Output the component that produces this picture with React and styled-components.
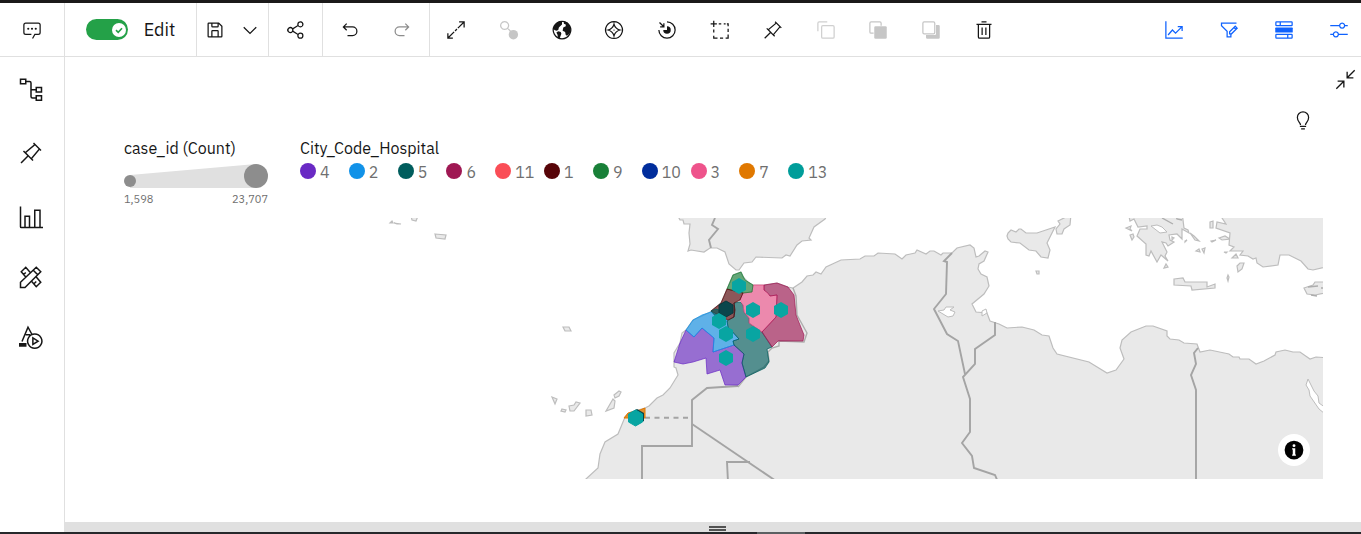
import React from "react";
import styled, { createGlobalStyle } from "styled-components";

const GlobalStyle = createGlobalStyle`
  *, *::before, *::after { box-sizing: border-box; }
  html, body, #root { height: 100%; margin: 0; }
  body {
    background: #fff;
    color: #161616;
    font-family: "IBM Plex Sans", Roboto, "Liberation Sans", sans-serif;
    font-size: 16px;
  }
`;

/* ---------- layout ---------- */

const Shell = styled.div`
  display: flex;
  flex-direction: column;
  min-height: 100%;
  border-top: 3px solid #1b1919;
`;

const Toolbar = styled.header`
  display: flex;
  height: 54px;
  border-bottom: 1px solid #e0e0e0;
`;

const Group = styled.div`
  display: flex;
  align-items: center;
  justify-content: ${(p) => p.$justify || "center"};
  width: ${(p) => p.$width}px;
  padding: 0 ${(p) => p.$pad || 0}px;
  border-right: ${(p) => (p.$plain ? "none" : "1px solid #e0e0e0")};
  margin-left: ${(p) => (p.$end ? "auto" : 0)};
`;

const IconButton = styled.button`
  display: flex;
  align-items: center;
  justify-content: center;
  width: ${(p) => p.$size || 20}px;
  height: ${(p) => p.$size || 20}px;
  padding: 0;
  border: 0;
  background: none;
  color: ${(p) => p.$color || "#161616"};
  cursor: pointer;
  &:disabled { cursor: default; }
`;

const Body = styled.div`
  display: flex;
  flex: 1;
`;

const Sidebar = styled.nav`
  display: flex;
  flex-direction: column;
  align-items: center;
  gap: 36px;
  width: 65px;
  padding: 20px 2px 0 0;
  border-right: 1px solid #e0e0e0;
`;

const SideGroup = styled.div`
  display: flex;
  flex-direction: column;
  gap: ${(p) => p.$gap}px;
`;

const Main = styled.main`
  display: flex;
  flex: 1;
  flex-direction: column;
  min-width: 0;
`;

const CornerActions = styled.div`
  display: flex;
  flex-direction: column;
  align-items: flex-end;
  gap: 20px;
  padding: 12px 5px 0 0;
`;

const HintRow = styled.div`
  display: flex;
  padding-right: 43px;
`;

const Chart = styled.section`
  display: flex;
  flex-direction: column;
  gap: 12px;
  padding: 8px 38px 0 59px;
`;

const Legends = styled.div`
  display: flex;
  gap: 32px;
  height: 68px;
`;

const Legend = styled.div`
  width: ${(p) => p.$width}px;
`;

const LegendTitle = styled.h2`
  margin: 0 0 5px;
  font-size: 16px;
  font-weight: 400;
  line-height: 20px;
  white-space: nowrap;
`;

const RangeLabels = styled.div`
  display: flex;
  justify-content: space-between;
  margin-top: 4px;
  color: #6f6f6f;
  font-size: 11px;
  line-height: 14px;
`;

const Swatches = styled.ul`
  display: grid;
  grid-template-columns: repeat(11, 1fr);
  margin: 0;
  padding: 0;
  list-style: none;
`;

const Swatch = styled.li`
  display: flex;
  align-items: flex-start;
  gap: 4px;
  color: #6f6f6f;
  line-height: 18px;
  &::before {
    content: "";
    width: 16px;
    height: 16px;
    border-radius: 50%;
    background: ${(p) => p.$color};
  }
`;

const MapFrame = styled.div`
  position: relative;
  height: 261px;
  overflow: hidden;
`;

const MapSvg = styled.svg`
  display: block;
  width: 100%;
  height: 261px;
`;

const InfoButton = styled.button`
  position: absolute;
  right: 13px;
  bottom: 13px;
  display: flex;
  align-items: center;
  justify-content: center;
  width: 32px;
  height: 32px;
  padding: 0;
  border: 0;
  border-radius: 50%;
  background: #fff;
`;

const Splitter = styled.div`
  display: flex;
  flex-direction: column;
  align-items: center;
  gap: 1px;
  height: 10px;
  margin-top: auto;
  padding: 4px 0 0 8px;
  background: #e0e0e0;
  &::before, &::after {
    content: "";
    width: 17px;
    height: 2px;
    background: #525252;
  }
`;

const Taskbar = styled.footer`
  display: flex;
  justify-content: center;
  height: 2px;
  padding-left: 201px;
  background: #26282b;
`;

const TaskbarItem = styled.span`
  width: 48px;
  background: #5b6062;
`;

/* ---------- edit switch ---------- */

const SwitchLabel = styled.label`
  display: flex;
  align-items: center;
  gap: 16px;
  font-size: 18px;
  line-height: 24px;
  cursor: pointer;
`;

const SwitchInput = styled.input`
  appearance: none;
  width: 42px;
  height: 21px;
  margin: 0;
  border-radius: 11px;
  background: #24a148 url("data:image/svg+xml,%3Csvg xmlns='http://www.w3.org/2000/svg' viewBox='0 0 14 14'%3E%3Ccircle cx='7' cy='7' r='7' fill='white'/%3E%3Cpath d='M4 7.2l2.2 2.1L10 5.2' fill='none' stroke='%2324a148' stroke-width='1.6'/%3E%3C/svg%3E")
    no-repeat right 2px center / 14px 14px;
`;

/* ---------- icons ---------- */

const filled = (d) => <path fill="currentColor" d={d} />;
const lined = (d, w = 2) => (
  <path fill="none" stroke="currentColor" strokeWidth={w} d={d} />
);

const PIN =
  "M28.59,13.31,30,11.9,20,2,18.69,3.42,19.87,4.6,8.38,14.32,6.66,12.61,5.25,14l5.66,5.68L2,28.58,3.41,30l8.91-8.91L18,26.75l1.39-1.42-1.71-1.71L27.4,12.13ZM16.26,22.2,9.8,15.74,21.29,6,26,10.71Z";

const ICONS = {
  chat: (
    <>
      {filled("M17.74,30,16,29l4-7h6a2,2,0,0,0,2-2V8a2,2,0,0,0-2-2H6A2,2,0,0,0,4,8V20a2,2,0,0,0,2,2h9v2H6a4,4,0,0,1-4-4V8A4,4,0,0,1,6,4H26a4,4,0,0,1,4,4V20a4,4,0,0,1-4,4H21.16Z")}
      <g fill="currentColor">
        <circle cx="10" cy="14" r="1.7" /><circle cx="16" cy="14" r="1.7" /><circle cx="22" cy="14" r="1.7" />
      </g>
    </>
  ),
  save: filled("M27.71,9.29l-5-5A1,1,0,0,0,22,4H6A2,2,0,0,0,4,6V26a2,2,0,0,0,2,2H26a2,2,0,0,0,2-2V10A1,1,0,0,0,27.71,9.29ZM12,6h8v4H12Zm8,20H12V18h8Zm2,0V18a2,2,0,0,0-2-2H12a2,2,0,0,0-2,2v8H6V6h4v4a2,2,0,0,0,2,2h8a2,2,0,0,0,2-2V6.41l4,4V26Z"),
  chevron: lined("M6 11.5l10 10 10-10"),
  share: filled("M23,20a5,5,0,0,0-3.89,1.89L11.8,17.32a4.46,4.46,0,0,0,0-2.64l7.31-4.57A5,5,0,1,0,18,7a4.79,4.79,0,0,0,.2,1.32l-7.31,4.57a5,5,0,1,0,0,6.22l7.31,4.57A4.79,4.79,0,0,0,18,25a5,5,0,1,0,5-5ZM23,4a3,3,0,1,1-3,3A3,3,0,0,1,23,4ZM7,19a3,3,0,1,1,3-3A3,3,0,0,1,7,19Zm16,9a3,3,0,1,1,3-3A3,3,0,0,1,23,28Z"),
  undo: filled("M20,10H7.8149l3.5874-3.5859L10,5,4,11,10,17l1.4023-1.4146L7.8179,12H20a6,6,0,0,1,0,12H12v2h8a8,8,0,0,0,0-16Z"),
  redo: filled("M12,10H24.1851L20.5977,6.4141,22,5,28,11,22,17l-1.4023-1.4146L24.1821,12H12a6,6,0,0,0,0,12h8v2H12a8,8,0,0,1,0-16Z"),
  expand: lined("M21 3h8v9M28.5 3.5L19 13M17.5 14.5l-3 3M11 29H3v-8M3.5 28.5L13 19"),
  link: (
    <>
      {lined("M9 2.5a6.3 6.3 0 1 0 .01 0M13.5 13l6 6")}
      <circle cx="23" cy="23.5" r="7.5" fill="currentColor" />
    </>
  ),
  earth: (
    <>
      {lined("M16 2a14 14 0 1 0 .01 0", 2)}
      {filled("M3 10L8 4 12 2 16 3 16 7 13 10 11 12 10 16 7 17 4 16 2 14zM7 20L10 18 14 19 15 22 12 30 9 28 9 24zM19 2L25 4 29 10 30 17 28 22 24 25 22 24 21 19 17 17 18 12 22 10 22 7 19 6z")}
    </>
  ),
  compass: (
    <>
      {lined("M16 2.500a13.500 13.500 0 1 0 .01 0M16 6.5Q18 14 25.5 16 18 18 16 25.5 14 18 6.5 16 14 14 16 6.5z", 2)}
      <circle cx="16" cy="16" r="1" fill="currentColor" />
    </>
  ),
  target: (
    <>
      {lined("M16 3a13 13 0 1 1-13 13M4 4l6.5 6.5M11 5v6H5")}
      {filled("M16 10a6 6 0 1 1-6 6h6z")}
    </>
  ),
  select: lined("M6 1v10M1 6h10M14 6h4M22 6h3M27 6h2v4M29 14v5M29 23v6h-4M21 29h-5M12 29H7M6 30v-5M6 20v-5"),
  pin: filled(PIN),
  group: lined("M18 3H5a2 2 0 0 0-2 2v13M11 9h16a2 2 0 0 1 2 2v16a2 2 0 0 1-2 2H11a2 2 0 0 1-2-2V11a2 2 0 0 1 2-2z"),
  front: (
    <>
      {lined("M9 21H5a2 2 0 0 1-2-2V5a2 2 0 0 1 2-2h14a2 2 0 0 1 2 2v4")}
      <rect x="10" y="10" width="20" height="20" rx="2" fill="currentColor" />
    </>
  ),
  back: (
    <>
      {lined("M5 3h15a2 2 0 0 1 2 2v15a2 2 0 0 1-2 2H5a2 2 0 0 1-2-2V5a2 2 0 0 1 2-2z")}
      {filled("M24 8h4a2 2 0 0 1 2 2v18a2 2 0 0 1-2 2H10a2 2 0 0 1-2-2v-4h14a2 2 0 0 0 2-2z")}
    </>
  ),
  trash: lined("M13 12v12M19 12v12M4 7h24M7 7v20a2 2 0 0 0 2 2h14a2 2 0 0 0 2-2V7M12 3h8"),
  trend: lined("M3 2v27h27M6.5 24l7-8 5 5 10-10M22 10.500h7v7"),
  filterEdit: lined("M28 5H4v4l9 9v9h6v-5M17 23v-4l9-9 3 3-9 9h-4M24 12l3 3"),
  stack: (
    <>
      <rect x="2" y="12" width="28" height="8" rx="1" fill="currentColor" />
      {lined("M4 3h24a1 1 0 0 1 1 1v4a1 1 0 0 1-1 1H4a1 1 0 0 1-1-1V4a1 1 0 0 1 1-1zM10 3v6M4 23h24a1 1 0 0 1 1 1v4a1 1 0 0 1-1 1H4a1 1 0 0 1-1-1v-4a1 1 0 0 1 1-1zM22 23v6")}
    </>
  ),
  sliders: lined("M2 9h15M25 9h5M21 5a4 4 0 1 0 .01 0M2 23h5M15 23h15M11 19a4 4 0 1 0 .01 0"),
  tree: lined("M2 3h7v6H2zM9 6h5a2 2 0 0 1 2 2v18a2 2 0 0 0 2 2h5M16 17h7M23 14h7v6h-7zM23 25h7v6h-7z"),
  bars: lined("M2 2v27a1 1 0 0 0 1 1h29M8 30V15h6v15M21 30V7h7v23"),
  tools: lined("M2 30v-7L23 3l6 6L8 30zM19 7l6 6M15 10L9 3 3 9l6 7M6 13l3-3M17 22l6 7 6-6-6-7M20 25l3-3"),
  animate: (
    <>
      {lined("M4 22L12 3l5 9M9 13h6M21 12a9.500 9.500 0 1 0 .01 0M18.500 17v9l7-4.500z")}
      {filled("M0 24h10v5H0z")}
    </>
  ),
  collapse: lined("M30 2L19 13M18.500 4v9.500H28M2 30l11-11M4 18.500h9.500V28"),
  bulb: lined("M11 26h10M13 30h6M12 24c0-4-5-5-5-12a9 9 0 0 1 18 0c0 7-5 8-5 12"),
  info: (
    <>
      <circle cx="16" cy="16" r="15" fill="#000" />
      <circle cx="16" cy="9" r="2.300" fill="#fff" />
      <path fill="#fff" d="M13 13h5v10h1v2h-6v-2h1v-8h-1z" />
    </>
  ),
};

const Icon = ({ name, size = 20 }) => (
  <svg width={size} height={size} viewBox="0 0 32 32" aria-hidden="true">
    {ICONS[name]}
  </svg>
);

const Tool = ({ name, label, size, color, disabled }) => (
  <IconButton type="button" aria-label={label} $size={size} $color={color} disabled={disabled}>
    <Icon name={name} size={size} />
  </IconButton>
);

/* ---------- data ---------- */

const CANVAS_TOOLS = [
  ["expand", "Fit to canvas"],
  ["link", "Connect", "#c6c6c6"],
  ["earth", "Map layers"],
  ["compass", "Explore"],
  ["target", "Focus"],
  ["select", "Select area"],
  ["pin", "Pin"],
  ["group", "Group", "#d0d0d0"],
  ["front", "Bring to front", "#c6c6c6"],
  ["back", "Send to back", "#c6c6c6"],
  ["trash", "Delete"],
];

const PANEL_TOOLS = [
  ["trend", "Insights"],
  ["filterEdit", "Filters"],
  ["stack", "Fields"],
  ["sliders", "Properties"],
];

const SIDE_TOOLS = [
  { gap: 40, tools: [["tree", "Sources"], ["pin", "Pins"], ["bars", "Visualizations"]] },
  { gap: 36, tools: [["tools", "Widgets"], ["animate", "Animation"]] },
];

const CITY_CODES = [
  ["4", "#6929c4"], ["2", "#1192e8"], ["5", "#005d5d"], ["6", "#9f1853"],
  ["11", "#fa4d56"], ["1", "#570408"], ["9", "#198038"], ["10", "#002d9c"],
  ["3", "#ee538b"], ["7", "#e07800"], ["13", "#009d9a"],
];

const LAND = [
  // North Africa
  "580,485 586,479 598,468 600,454 605,442 618,434 625,417 631,412 645,408 649,406 657,398 663,395 670,388 678,375 676,368 674,367 674,353 680,343 682,333 686,330 693,320 702,316 710,312 721,303 727,289 733,275 741,272 743,277 748,282 753,285 765,285 777,283 788,287 793,288 802,282 807,276 813,275 816,272 821,274 826,267 841,260 860,259 865,256 874,256 878,253 895,254 902,259 906,255 915,253 917,250 926,254 930,251 934,251 941,255 943,253 952,253 957,248 970,245 974,248 976,257 979,256 985,251 988,252 984,261 979,264 978,269 981,274 987,277 989,286 984,294 972,304 976,312 987,313 990,321 999,324 1007,328 1022,327 1034,330 1042,335 1049,336 1053,348 1057,354 1089,362 1107,373 1116,370 1124,359 1120,348 1122,340 1131,332 1146,326 1153,326 1167,331 1167,336 1170,339 1179,340 1184,343 1197,344 1200,352 1210,350 1229,354 1233,357 1239,357 1240,359 1249,359 1256,364 1264,361 1275,355 1276,352 1285,350 1293,352 1300,352 1310,359 1316,357 1330,358 1330,485",
  // Iberia
  "679,210 679,218 680,220 683,220 684,224 690,224 689,233 690,244 688,251 691,250 704,252 710,248 717,248 725,252 729,264 736,270 739,270 744,263 752,262 756,257 782,258 786,255 790,256 797,245 802,241 811,240 809,238 814,227 825,219 830,210",
  // Sicily, Calabria, Malta
  "1007,236 1008,233 1011,230 1016,232 1019,229 1021,229 1026,233 1037,233 1055,227 1047,243 1050,250 1048,258 1041,257 1036,251 1029,250 1020,243 1011,242 1008,239",
  "1058,221 1064,218 1071,214 1070,225 1064,229 1062,234 1057,234 1056,229 1060,224",
  "1036,271 1039,271 1039,274 1037,274",
  // Greece
  "1128,212 1130,221 1134,219 1138,227 1147,226 1147,229 1140,229 1137,236 1146,244 1146,255 1149,256 1151,251 1157,262 1161,255 1168,261 1165,256 1167,252 1162,242 1166,243 1168,246 1174,242 1170,240 1169,235 1177,234 1182,239 1182,229 1189,233 1188,230 1184,228 1182,212",
  "1126,228 1131,226 1130,229 1132,231", "1130,235 1133,234 1134,237 1132,240",
  "1164,268 1166,264 1168,267", "1190,233 1194,236 1199,241 1195,240",
  "1196,251 1199,249 1200,252", "1202,249 1205,248 1204,253", "1172,237 1174,238 1172,240",
  "1210,222 1213,221 1213,228 1210,228", "1211,241 1216,240 1212,242", "1185,241 1187,240 1185,242",
  "1219,238 1225,236 1230,239 1222,240", "1232,258 1236,254 1238,258", "1224,252 1227,252 1226,253",
  // Turkey
  "1219,210 1222,218 1226,224 1217,222 1216,228 1230,233 1229,245 1234,247 1230,251 1243,251 1240,255 1248,256 1253,259 1256,258 1257,263 1263,267 1278,265 1280,255 1289,255 1301,261 1308,269 1313,270 1330,266 1330,210",
  // Crete, Rhodes, Karpathos, Cyprus
  "1174,279 1183,278 1185,282 1207,282 1207,287 1215,284 1215,288 1192,290 1191,286 1174,285",
  "1237,266 1240,263 1244,263 1242,269 1238,272", "1228,275 1229,277 1228,281 1227,278",
  "1304,288 1313,285 1315,282 1330,282 1330,292 1315,295 1307,294",
  // Canary Islands, Madeira
  "552,397 557,399 555,404", "562,409 566,410 565,412 561,411",
  "569,406 574,405 576,402 580,403 574,411 570,411", "586,410 591,410 592,415 586,416",
  "606,411 613,399 615,401 614,408", "614,395 619,391 621,392 619,396 615,398",
  "563,327 569,327 571,331 565,331",
  // Azores
  "435,234 446,235 445,239 436,238", "411,216 418,216 416,221 412,220",
  "390,223 392,221 393,223", "394,223 401,224 397,224",
];

const WATER = [
  "1308,379 1306,385 1309,390 1310,396 1319,409 1330,418 1330,411 1319,403 1318,396 1314,391",
  "938,311 944,310 946,307 954,307 950,310 955,312 953,316 948,317",
  "1151,226 1160,233 1167,232 1162,227 1157,225",
  "982,311 986,309 987,313 982,316",
];

const BORDERS = [
  "715,218 712,225 718,229 709,240 711,248",
  "738,386 707,388 692,400 692,446 642,446 642,482",
  "692,424 776,481",
  "750,462 727,462 728,482",
  "952,253 944,261 947,262 946,294 934,309 947,334 958,341 965,374",
  "995,322 995,335 975,349 975,364 963,377 970,399 970,432 962,443 972,456 974,468 995,475 998,482",
  "1198,348 1194,353 1196,364 1191,375 1196,390 1196,482",
];

const FINE_BORDERS = [
  "793,288 796,296 797,315 807,333 804,342 779,341 779,346 772,348 768,352 769,361 764,367 746,377 738,387",
  "1162,218 1173,224", "1176,215 1177,219 1182,220", "1308,287 1318,286", "1321,288 1324,288", "1311,295 1317,296",
];

const REGIONS = [
  ["#6929c4", "686,330 694,337 702,328 714,338 713,352 734,345 744,354 742,363 746,377 738,385 725,385 720,370 707,374 706,358 693,362 683,364 674,362 680,343"],
  ["#1192e8", "686,330 693,320 702,315 711,312 727,320 728,327 739,339 733,341 734,345 713,352 714,338 702,328 694,337"],
  ["#005d5d", "734,303 740,302 743,305 744,312 749,318 749,323 762,332 772,347 767,349 769,362 765,368 746,377 742,363 744,354 734,345 733,341 739,339 728,327 727,321 734,317"],
  ["#ee538b", "753,285 764,285 764,290 770,296 777,295 776,317 762,332 749,323 749,318 744,312 743,305 740,300 743,293 752,292"],
  ["#9f1853", "764,285 777,283 788,287 794,295 796,315 804,335 803,341 778,341 772,347 762,332 776,317 777,295 770,296 768,293 764,290"],
  ["#198038", "727,289 733,275 741,272 745,280 753,285 752,292 743,293 735,291"],
  ["#570408", "727,289 735,291 743,293 740,300 734,303 735,310 734,317 728,320 711,311 721,303"],
  ["#005d5d", "711,311 716,309 722,311 717,318"],
];

const HEXES = [
  [739, 286], [753, 310], [781, 310], [753, 334],
  [719, 321], [726, 334], [726, 358],
];

const hexPoints = (cx, cy, r = 8) =>
  [[0, -r], [r - 1, -r / 2], [r - 1, r / 2], [0, r], [1 - r, r / 2], [1 - r, -r / 2]]
    .map(([dx, dy]) => `${cx + dx},${cy + dy}`)
    .join(" ");

const CityMap = () => (
  <MapSvg viewBox="124 218 1199 261" preserveAspectRatio="xMaxYMin slice" role="img" aria-label="City map">
    <g fill="#e9e9e9" stroke="#bdbdbd" strokeWidth="1.200">
      {LAND.map((p) => <polygon key={p} points={p} />)}
    </g>
    <g fill="#fff" stroke="#bdbdbd">
      {WATER.map((p) => <polygon key={p} points={p} />)}
    </g>
    <g fill="none" stroke="#a4a4a4" strokeWidth="1.900">
      {BORDERS.map((p) => <polyline key={p} points={p} />)}
      <path d="M645 417.700h47" strokeDasharray="5 4.500" />
    </g>
    <g fill="none" stroke="#adadad" strokeWidth="1.400">
      {FINE_BORDERS.map((p) => <polyline key={p} points={p} />)}
    </g>
    {REGIONS.map(([color, p]) => (
      <polygon key={p} points={p} fill={color} fillOpacity="0.640" stroke={color} strokeOpacity="0.700" />
    ))}
    <polygon points="624,418 628,413 640,410 645,408 645,418" fill="#e07800" fillOpacity="0.800" stroke="#e07800" />
    <polygon points={hexPoints(726, 309)} fill="#0b464c" stroke="#08383d" />
    <g fill="#08a5a2">
      {HEXES.map(([x, y]) => <polygon key={`${x}-${y}`} points={hexPoints(x, y)} />)}
    </g>
    <polygon points={hexPoints(637, 417)} fill="#0b464c" />
    <polygon points={hexPoints(635.500, 418)} fill="#08a5a2" stroke="#08a5a2" />
  </MapSvg>
);

export default function App() {
  return (
    <>
      <GlobalStyle />
      <Shell>
        <Toolbar>
          <Group $width={65} $pad={1}><Tool name="chat" label="Comments" /></Group>
          <Group $width={132}>
            <SwitchLabel>
              <SwitchInput type="checkbox" role="switch" defaultChecked />
              Edit
            </SwitchLabel>
          </Group>
          <Group $width={72} $justify="space-between" $pad={8}>
            <Tool name="save" label="Save" />
            <Tool name="chevron" label="Save options" />
          </Group>
          <Group $width={54}><Tool name="share" label="Share" /></Group>
          <Group $width={107} $justify="space-between" $pad={17}>
            <Tool name="undo" label="Undo" />
            <Tool name="redo" label="Redo" color="#8d8d8d" disabled />
          </Group>
          <Group $width={580} $justify="space-between" $pad={16} $plain>
            {CANVAS_TOOLS.map(([name, label, color]) => (
              <Tool key={name} name={name} label={label} color={color} disabled={!!color} />
            ))}
          </Group>
          <Group $width={209} $justify="space-between" $pad={12} $plain $end>
            {PANEL_TOOLS.map(([name, label]) => (
              <Tool key={name} name={name} label={label} color="#0f62fe" />
            ))}
          </Group>
        </Toolbar>
        <Body>
          <Sidebar aria-label="Panels">
            {SIDE_TOOLS.map(({ gap, tools }) => (
              <SideGroup key={gap} $gap={gap}>
                {tools.map(([name, label]) => (
                  <Tool key={name} name={name} label={label} size={24} />
                ))}
              </SideGroup>
            ))}
          </Sidebar>
          <Main>
            <CornerActions>
              <Tool name="collapse" label="Collapse" size={21} />
              <HintRow><Tool name="bulb" label="Insights" /></HintRow>
            </CornerActions>
            <Chart>
              <Legends>
                <Legend $width={144}>
                  <LegendTitle>case_id (Count)</LegendTitle>
                  <svg width="144" height="25" viewBox="0 0 144 25" display="block" aria-hidden="true">
                    <path d="M6 12L132 1v24H6z" fill="#e0e0e0" />
                    <circle cx="6" cy="18" r="6" fill="#8d8d8d" />
                    <circle cx="132" cy="13" r="12" fill="#8d8d8d" />
                  </svg>
                  <RangeLabels><span>1,598</span><span>23,707</span></RangeLabels>
                </Legend>
                <Legend $width={537}>
                  <LegendTitle>City_Code_Hospital</LegendTitle>
                  <Swatches>
                    {CITY_CODES.map(([code, color]) => (
                      <Swatch key={code} $color={color}>{code}</Swatch>
                    ))}
                  </Swatches>
                </Legend>
              </Legends>
              <MapFrame>
                <CityMap />
                <InfoButton type="button" aria-label="Map information"><Icon name="info" /></InfoButton>
              </MapFrame>
            </Chart>
            <Splitter role="separator" />
          </Main>
        </Body>
        <Taskbar><TaskbarItem /></Taskbar>
      </Shell>
    </>
  );
}
